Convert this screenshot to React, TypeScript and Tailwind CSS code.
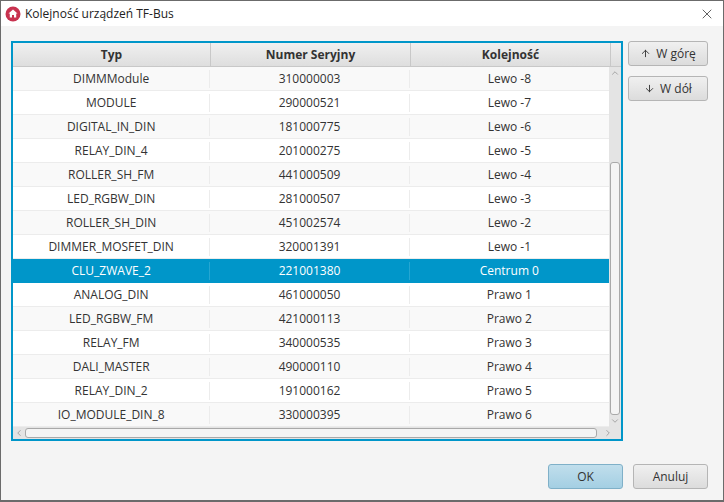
import { ArrowDown, ArrowUp, ChevronDown, ChevronLeft, ChevronRight, ChevronUp, X } from 'lucide-react';

const devices = [
    ['DIMMModule', '310000003', 'Lewo -8'],
    ['MODULE', '290000521', 'Lewo -7'],
    ['DIGITAL_IN_DIN', '181000775', 'Lewo -6'],
    ['RELAY_DIN_4', '201000275', 'Lewo -5'],
    ['ROLLER_SH_FM', '441000509', 'Lewo -4'],
    ['LED_RGBW_DIN', '281000507', 'Lewo -3'],
    ['ROLLER_SH_DIN', '451002574', 'Lewo -2'],
    ['DIMMER_MOSFET_DIN', '320001391', 'Lewo -1'],
    ['CLU_ZWAVE_2', '221001380', 'Centrum 0'],
    ['ANALOG_DIN', '461000050', 'Prawo 1'],
    ['LED_RGBW_FM', '421000113', 'Prawo 2'],
    ['RELAY_FM', '340000535', 'Prawo 3'],
    ['DALI_MASTER', '490000110', 'Prawo 4'],
    ['RELAY_DIN_2', '191000162', 'Prawo 5'],
    ['IO_MODULE_DIN_8', '330000395', 'Prawo 6'],
];

const SELECTED = 8;

function SideButton({ icon, label }: { icon: React.ReactNode; label: string }) {
    return (
        <button className="w-[80px] h-[25px] flex items-center justify-center gap-[5px] rounded-[3px] border border-[#b5b5b5] bg-gradient-to-b from-[#f0f0f0] to-[#dcdcdc] text-[12px] text-[#333]">
            {icon}
            {label}
        </button>
    );
}

export default function App() {
    return (
        <div className="w-[724px] h-[502px] overflow-hidden bg-[#f4f4f4] border border-b-2 border-[#6b6b6b] flex flex-col text-[#333] font-['Open_Sans','Noto_Sans',sans-serif]">
            {/* Title bar */}
            <div className="h-[25px] shrink-0 bg-white flex items-center pl-[4px] pr-[8px]">
                <svg width="16" height="16" viewBox="0 0 16 16" className="shrink-0">
                    <circle cx="8" cy="8" r="7.5" fill="#c8324f" />
                    <path d="M8 3.5 L12.5 7.6 L11.2 7.6 L11.2 11.5 L9 11.5 L9 9 L7 9 L7 11.5 L4.8 11.5 L4.8 7.6 L3.5 7.6 Z" fill="#fff" />
                </svg>
                <span className="ml-[4px] text-[12px] text-[#222]">Kolejność urządzeń TF-Bus</span>
                <X size={16} strokeWidth={1} className="ml-auto text-[#111]" />
            </div>

            <div className="flex-1 flex flex-col pl-[10px] pr-[15px] pt-[15px] pb-[11px]">
                <div className="flex gap-[5px]">
                    {/* Table */}
                    <div className="w-[612px] h-[400px] shrink-0 border-2 border-[#0096c9] bg-white flex flex-col">
                        <div className="h-[24px] shrink-0 flex bg-gradient-to-b from-[#f0f0f0] to-[#dedede] border-b border-[#c8c8c8] text-[12px] font-bold text-[#333]">
                            <div className="w-[198px] flex items-center justify-center border-r border-[#c8c8c8]">Typ</div>
                            <div className="w-[200px] flex items-center justify-center border-r border-[#c8c8c8]">Numer Seryjny</div>
                            <div className="w-[200px] flex items-center justify-center border-r border-[#c8c8c8]">Kolejność</div>
                            <div className="flex-1" />
                        </div>

                        <div className="flex flex-1 min-h-0">
                            <div className="flex-1 min-w-0 flex flex-col">
                                {devices.map((row, i) => (
                                    <div
                                        key={row[1]}
                                        className={
                                            i === SELECTED
                                                ? 'h-[24px] shrink-0 flex items-center bg-[#0096c9] text-white text-[12px]'
                                                : i % 2 === 0
                                                  ? 'h-[24px] shrink-0 flex items-center bg-[#f9f9f9] border-b border-[#ececec] text-[12px]'
                                                  : 'h-[24px] shrink-0 flex items-center bg-white border-b border-[#ececec] text-[12px]'
                                        }
                                    >
                                        <div className={i === SELECTED ? 'w-[198px] text-center border-r border-[#25a6d2]' : 'w-[198px] text-center border-r border-[#ececec]'}>{row[0]}</div>
                                        <div className={i === SELECTED ? 'w-[200px] text-center border-r border-[#25a6d2]' : 'w-[200px] text-center border-r border-[#ececec]'}>{row[1]}</div>
                                        <div className="w-[200px] text-center">{row[2]}</div>
                                    </div>
                                ))}
                                <div className="flex-1 bg-[#f9f9f9]" />
                            </div>

                            {/* Vertical scrollbar */}
                            <div className="w-[12px] shrink-0 bg-[#e4e4e4] flex flex-col items-center">
                                <ChevronUp size={10} className="text-[#999] my-[1px]" />
                                <div className="h-[83px] shrink-0" />
                                <div className="w-[10px] flex-1 rounded-[3px] border border-[#a9a9a9] bg-[#f4f4f4]" />
                                <ChevronDown size={10} className="text-[#999] my-[1px]" />
                            </div>
                        </div>

                        {/* Horizontal scrollbar */}
                        <div className="h-[12px] shrink-0 bg-[#e4e4e4] flex items-center">
                            <ChevronLeft size={10} className="text-[#999] mx-[1px] shrink-0" />
                            <div className="w-[572px] h-[10px] rounded-[3px] border border-[#a9a9a9] bg-[#f4f4f4]" />
                            <ChevronRight size={10} className="text-[#999] ml-[6px] shrink-0" />
                        </div>
                    </div>

                    {/* Move buttons */}
                    <div className="flex flex-col gap-[10px]">
                        <SideButton icon={<ArrowUp size={11} />} label="W górę" />
                        <SideButton icon={<ArrowDown size={11} />} label="W dół" />
                    </div>
                </div>

                {/* Footer */}
                <div className="mt-auto flex justify-end gap-[10px]">
                    <button className="w-[75px] h-[25px] rounded-[3px] border border-[#7fb0c8] bg-gradient-to-b from-[#c0deec] to-[#a4cfe3] text-[12px] text-[#333]">OK</button>
                    <button className="w-[75px] h-[25px] rounded-[3px] border border-[#b5b5b5] bg-gradient-to-b from-[#f0f0f0] to-[#dcdcdc] text-[12px] text-[#333]">Anuluj</button>
                </div>
            </div>
        </div>
    );
}
